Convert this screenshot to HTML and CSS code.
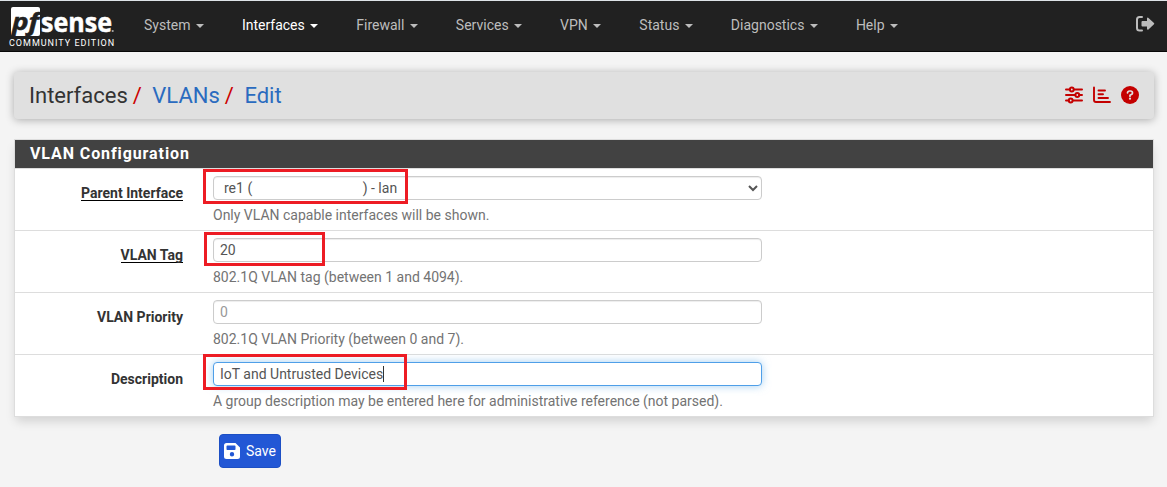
FILE: index.html
```html
<!DOCTYPE html>
<html lang="en">
<head>
  <meta charset="UTF-8">
  <meta name="viewport" content="width=device-width, initial-scale=1.0">
  <title>pfSense - Interfaces: VLANs: Edit</title>
  <link rel="stylesheet" href="styles.css">
</head>
<body>
  <nav class="navbar">
    <a class="brand" href="#">
      <svg class="logo" width="106" height="30" viewBox="0 0 106 30">
        <rect x="2" y="0" width="29" height="29" rx="2" fill="#fff"/>
        <text class="logo-pf" x="3" y="23" textLength="27" lengthAdjust="spacingAndGlyphs">pf</text>
        <text class="logo-sense" x="32" y="24.5" textLength="71" lengthAdjust="spacingAndGlyphs">sense</text>
        <circle cx="103.7" cy="24" r="1.1" fill="#aaa"/>
      </svg>
      <span class="edition">COMMUNITY EDITION</span>
    </a>
    <ul class="nav">
      <li><a href="#">System <span class="caret"></span></a></li>
      <li class="active"><a href="#">Interfaces <span class="caret"></span></a></li>
      <li><a href="#">Firewall <span class="caret"></span></a></li>
      <li><a href="#">Services <span class="caret"></span></a></li>
      <li><a href="#">VPN <span class="caret"></span></a></li>
      <li><a href="#">Status <span class="caret"></span></a></li>
      <li><a href="#">Diagnostics <span class="caret"></span></a></li>
      <li><a href="#">Help <span class="caret"></span></a></li>
    </ul>
    <a class="logout" href="#" aria-label="Logout">
      <svg width="20" height="18" viewBox="0 0 20 18">
        <path d="M7 2H4.500Q2 2 2 4.500V13Q2 15.500 4.500 15.500H7" fill="none" stroke="currentColor" stroke-width="2" stroke-linecap="round"/>
        <path d="M7.500 6H12V3.300Q12.300 2.300 13.200 2.700L19 8.100Q19.500 8.700 19 9.300L13.200 14.700Q12.300 15.100 12 14.100V11.500H7.500Q6.500 11.500 6.500 10.500V7Q6.500 6 7.500 6Z" fill="currentColor"/>
      </svg>
    </a>
  </nav>

  <header class="header">
    <ol class="breadcrumb">
      <li>Interfaces</li>
      <li><a href="#">VLANs</a></li>
      <li><a href="#">Edit</a></li>
    </ol>
    <div class="context-links">
      <a href="#" aria-label="Settings">
        <svg width="18" height="18" viewBox="0 0 18 18" fill="none" stroke="currentColor" stroke-width="2" stroke-linecap="round">
          <path d="M1 3.500H4.500M9 3.500H17M1 9H10M14.500 9H17M1 14.500H3.500M8 14.500H17"/>
          <circle cx="6.800" cy="3.500" r="1.900"/>
          <circle cx="12.300" cy="9" r="1.900"/>
          <circle cx="5.700" cy="14.500" r="1.900"/>
        </svg>
      </a>
      <a href="#" aria-label="Status">
        <svg width="18" height="18" viewBox="0 0 18 18" fill="none" stroke="currentColor" stroke-width="1.900" stroke-linecap="round">
          <path d="M1 1.500V14Q1 16 3 16H17M5.500 4.500H12M5.500 8.300H10M5.500 12H15"/>
        </svg>
      </a>
      <a href="#" aria-label="Help">
        <svg width="18" height="18" viewBox="0 0 18 18">
          <circle cx="9" cy="9" r="9" fill="currentColor"/>
          <path d="M6.500 6.800Q6.700 5 8.600 5H9.500Q11.500 5.100 11.500 6.900Q11.500 8 10.300 8.600L9 9.300V10.200" fill="none" stroke="#e0e0e0" stroke-width="1.700" stroke-linecap="round"/>
          <circle cx="9" cy="12.700" r="1.100" fill="#e0e0e0"/>
        </svg>
      </a>
    </div>
  </header>

  <form>
    <section class="panel">
      <h2 class="panel-title">VLAN Configuration</h2>
      <div class="form-group">
        <label class="required" for="if"><span>Parent Interface</span></label>
        <div class="field">
          <select class="form-control" id="if">
            <option>re1 (&nbsp;&nbsp;&nbsp;&nbsp;&nbsp;&nbsp;&nbsp;&nbsp;&nbsp;&nbsp;&nbsp;&nbsp;&nbsp;&nbsp;&nbsp;&nbsp;&nbsp;&nbsp;&nbsp;&nbsp;&nbsp;&nbsp;&nbsp;&nbsp;&nbsp;&nbsp;&nbsp;&nbsp;&nbsp;&nbsp;&nbsp;&thinsp;) - lan</option>
          </select>
          <span class="help">Only VLAN capable interfaces will be shown.</span>
          <span class="mark mark-parent"></span>
        </div>
      </div>
      <div class="form-group">
        <label class="required" for="tag"><span>VLAN Tag</span></label>
        <div class="field">
          <input class="form-control" id="tag" type="text" value="20">
          <span class="help">802.1Q VLAN tag (between 1 and 4094).</span>
          <span class="mark mark-tag"></span>
        </div>
      </div>
      <div class="form-group">
        <label for="pcp"><span>VLAN Priority</span></label>
        <div class="field">
          <input class="form-control" id="pcp" type="text" placeholder="0">
          <span class="help">802.1Q VLAN Priority (between 0 and 7).</span>
        </div>
      </div>
      <div class="form-group">
        <label for="descr"><span>Description</span></label>
        <div class="field">
          <input class="form-control focused" id="descr" type="text" value="IoT and Untrusted Devices">
          <span class="text-cursor"></span>
          <span class="help">A group description may be entered here for administrative reference (not parsed).</span>
          <span class="mark mark-descr"></span>
        </div>
      </div>
    </section>

    <button class="btn" type="button">
      <svg width="16" height="16" viewBox="0 0 16 16">
        <path fill="#fff" fill-rule="evenodd" d="M2.500 0H11.500L16 4.500V13.500Q16 16 13.500 16H2.500Q0 16 0 13.500V2.500Q0 0 2.500 0ZM3.300 2.500Q2.500 2.500 2.500 3.300V6.200Q2.500 7 3.300 7H10.700Q11.500 7 11.500 6.200V3.300Q11.500 2.500 10.700 2.500ZM8 9A2.200 2.200 0 1 0 8 13.400A2.200 2.200 0 1 0 8 9Z"/>
      </svg>
      Save
    </button>
  </form>
</body>
</html>
```
FILE: styles.css
```css
* {
  box-sizing: border-box;
}
body {
  margin: 0;
  height: 487px;
  overflow: hidden;
  border-top: 1px solid #dee3e7;
  background: #f4f4f4;
  color: #333;
  font-family: Roboto, sans-serif;
  font-size: 14px;
  line-height: 20px;
}
a {
  text-decoration: none;
}
.navbar {
  display: flex;
  height: 51px;
  background: #212121;
  border-bottom: 1px solid #080808;
}
.brand {
  display: flex;
  flex-direction: column;
  width: 116px;
  padding: 6px 0 0 9px;
  color: #fff;
}
.logo {
  display: block;
  overflow: visible;
}
.logo-pf {
  font: italic bold 23px "Open Sans", sans-serif;
  fill: #212121;
  stroke: #212121;
  stroke-width: 0.5px;
}
.logo-sense {
  font: bold 27px "Open Sans", sans-serif;
  fill: #fff;
  stroke: #fff;
  stroke-width: 0.5px;
}
.edition {
  margin-top: 1px;
  font-size: 9px;
  line-height: 11px;
  letter-spacing: 1px;
  white-space: nowrap;
}
.nav {
  display: flex;
  margin: 0 0 0 9px;
  padding: 0;
  list-style: none;
}
.nav a {
  display: block;
  padding: 14px 19px;
  color: #bdbdbd;
}
.nav .active a {
  color: #fff;
}
.caret {
  display: inline-block;
  margin-left: 2px;
  vertical-align: middle;
  border-top: 4px solid;
  border-right: 4px solid transparent;
  border-left: 4px solid transparent;
}
.logout {
  margin: 14px 12px 0 auto;
  color: #bdbdbd;
}
.header {
  display: flex;
  align-items: center;
  justify-content: space-between;
  height: 47px;
  margin: 20px 13px 20px 14px;
  padding: 0 15px;
  border-radius: 4px;
  background: #e0e0e0;
  box-shadow: 0 1px 8px rgba(0, 0, 0, 0.3);
}
.breadcrumb {
  display: flex;
  margin: 0;
  padding: 0;
  list-style: none;
  font-size: 22px;
}
.breadcrumb li + li::before {
  content: "/";
  padding: 0 10.5px 0 5px;
  color: #c00;
}
.breadcrumb a {
  color: #2a6bbf;
}
.context-links {
  display: flex;
  gap: 10px;
  margin-top: -1px;
}
.context-links a {
  color: #c40000;
}
svg {
  display: block;
}
.panel {
  margin: 0 13px 0 14px;
  border: 1px solid #ddd;
  background: #fff;
  box-shadow: 0 6px 10px -2px rgba(0, 0, 0, 0.15);
}
.panel-title {
  margin: 0;
  height: 28px;
  padding-left: 15px;
  background: #424242;
  color: #fff;
  font-size: 16px;
  font-weight: bold;
  line-height: 27px;
  letter-spacing: 0.9px;
}
.form-group {
  display: flex;
  height: 62px;
  padding-top: 7px;
  border-top: 1px solid #ddd;
}
.form-group label {
  width: 168px;
  padding-top: 7px;
  font-weight: bold;
  text-align: right;
}
.required span {
  display: inline-block;
  height: 17px;
  line-height: 18px;
  border-bottom: 1px solid #000;
}
.field {
  position: relative;
  width: 549px;
  margin-left: 30px;
}
.form-control {
  display: block;
  width: 100%;
  height: 24px;
  padding: 0 6px;
  border: 1px solid #ccc;
  border-radius: 4px;
  background: #fff;
  box-shadow: inset 0 1px 1px rgba(0, 0, 0, 0.075);
  color: #555;
  font: inherit;
}
.form-control::placeholder {
  color: #999;
}
.form-control.focused {
  border-color: #4f9fe8;
  box-shadow: 0 0 8px rgba(102, 175, 233, 0.6);
}
.text-cursor {
  position: absolute;
  top: 4px;
  left: 170px;
  width: 1px;
  height: 16px;
  background: #333;
}
.help {
  display: block;
  margin-top: 5px;
  color: #737373;
}
/* red annotation boxes */
.mark {
  position: absolute;
  left: -10px;
  border: 3px solid #ed1c24;
}
.mark-parent {
  top: -7px;
  width: 205px;
  height: 35px;
}
.mark-tag {
  top: -6px;
  left: -9px;
  width: 121px;
  height: 34px;
}
.mark-descr {
  top: -8px;
  width: 204px;
  height: 36px;
}
.btn {
  display: flex;
  align-items: center;
  gap: 6px;
  height: 34px;
  margin: 17px 0 0 219px;
  padding: 0 4px;
  border: 1px solid #1c4fc4;
  border-radius: 4px;
  background: #2257d5;
  color: #fff;
  font: inherit;
}
```
